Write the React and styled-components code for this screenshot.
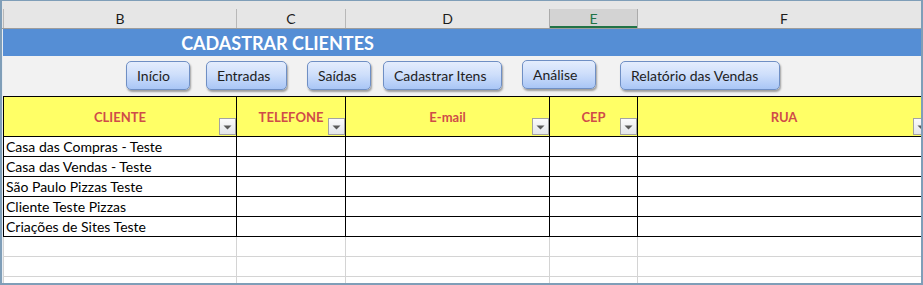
import React from "react";
import styled, { createGlobalStyle, css } from "styled-components";

const FONT = `Lato, "Liberation Sans", Arial, sans-serif`;

const Global = createGlobalStyle`
  html, body { margin: 0; padding: 0; background: #ffffff; }
  * { box-sizing: border-box; }
`;

const COLS = [
  { key: "B", w: 233, label: "CLIENTE" },
  { key: "C", w: 109, label: "TELEFONE" },
  { key: "D", w: 204, label: "E-mail" },
  { key: "E", w: 88, label: "CEP", selected: true },
  { key: "F", w: 293, label: "RUA" },
];
const TEMPLATE = COLS.map((c) => `${c.w}px`).join(" ");

const CLIENTS = [
  "Casa das Compras - Teste",
  "Casa das Vendas - Teste",
  "São Paulo Pizzas Teste",
  "Cliente Teste Pizzas",
  "Criações de Sites Teste",
];

const BUTTONS = [
  { label: "Início", gap: 123, w: 64 },
  { label: "Entradas", gap: 16, w: 81 },
  { label: "Saídas", gap: 20, w: 64 },
  { label: "Cadastrar Itens", gap: 12, w: 119 },
  { label: "Análise", gap: 20, w: 74, dy: -1 },
  { label: "Relatório das Vendas", gap: 24, w: 160 },
];

const Frame = styled.div`
  width: 923px;
  height: 285px;
  border-style: solid;
  border-color: #7f9eb8;
  border-width: 1px 2px 2px 2px;
  background: #e9edf1;
  overflow: hidden;
  display: flex;
  flex-direction: column;
  font-family: ${FONT};
`;

const HeaderBand = styled.div`
  height: 28px;
  flex: none;
  padding-top: 8px;
  background: #e6e6e6;
  border-bottom: 1px solid #9d9d9d;
  padding-left: 1px;
`;

const GridRow = styled.div`
  display: grid;
  grid-template-columns: ${TEMPLATE};
  width: max-content;
  margin-left: ${(p) => (p.$flush ? 0 : 1)}px;
  border-left: 1px solid ${(p) => p.$line};
  flex: none;
`;

const ColHead = styled.div`
  height: 19px;
  border-right: 1px solid #b8b8b8;
  display: flex;
  align-items: center;
  justify-content: center;
  font-size: 14px;
  color: #1c1c1c;
  ${(p) =>
    p.$selected &&
    css`
      background: #d3d3d3;
      color: #217346;
      box-shadow: inset 0 -2px 0 #217346;
      border-right-color: #ababab;
      margin-left: -1px;
      border-left: 1px solid #ababab;
    `}
`;

const TitleBand = styled.div`
  height: 27px;
  flex: none;
  margin-left: 1px;
  background: #558ed5;
  display: grid;
  grid-template-columns: 547px 1fr;
  align-items: center;
`;

const Title = styled.div`
  text-align: center;
  color: #ffffff;
  font-weight: 700;
  font-size: 18px;
  line-height: 1;
  padding-top: 1px;
  padding-left: 2px;
`;

const ButtonBand = styled.div`
  height: 40px;
  flex: none;
  margin-left: 1px;
  background: #f2f2f2;
  display: flex;
  align-items: flex-start;
  padding-top: 5px;
`;

const MacroButton = styled.div`
  flex: none;
  width: ${(p) => p.$w}px;
  height: 29px;
  margin-left: ${(p) => p.$gap}px;
  margin-top: ${(p) => p.$dy || 0}px;
  border: 1px solid #6f8fc4;
  border-radius: 5px;
  background: linear-gradient(180deg, #e4edfd 0%, #cfdffb 45%, #a9c6f6 100%);
  box-shadow: 1px 2px 2px rgba(0, 0, 0, 0.35);
  display: flex;
  align-items: center;
  padding-left: 10px;
  font-size: 14px;
  color: #1e1e1e;
  white-space: nowrap;
`;

const TableHead = styled(GridRow)`
  border-top: 1px solid #000;
`;

const HeadCell = styled.div`
  position: relative;
  height: 40px;
  background: #ffff66;
  border-right: 1px solid #000;
  border-bottom: 1px solid #000;
  display: flex;
  align-items: center;
  justify-content: center;
  font-weight: 700;
  font-size: 13px;
  color: #cf4c49;
  padding-top: 1px;
`;

const FilterButton = styled.div`
  position: absolute;
  right: 0;
  bottom: 1px;
  width: 17px;
  height: 17px;
  border: 1px solid #a3a3a3;
  background: linear-gradient(180deg, #fbfbfc 0%, #e3e5ea 100%);
  display: flex;
  align-items: center;
  justify-content: center;
  padding-top: 2px;
`;

const Cell = styled.div`
  height: 20px;
  border-right: 1px solid ${(p) => p.$line};
  border-bottom: 1px solid ${(p) => p.$line};
  background: #ffffff;
  font-size: 14px;
  color: #000;
  padding-left: 2px;
  display: flex;
  align-items: center;
  white-space: nowrap;
  overflow: hidden;
`;

function Triangle() {
  return (
    <svg width="9" height="5" viewBox="0 0 9 5">
      <path d="M0.5 0.5 L8.5 0.5 L4.5 4.5 Z" fill="#5a5a5a" />
    </svg>
  );
}

export default function App() {
  const emptyRows = 3;
  return (
    <>
      <Global />
      <Frame>
        <HeaderBand>
          <GridRow $line="#b8b8b8" $flush>
            {COLS.map((c) => (
              <ColHead key={c.key} $selected={c.selected}>
                {c.key}
              </ColHead>
            ))}
          </GridRow>
        </HeaderBand>

        <TitleBand>
          <Title>CADASTRAR CLIENTES</Title>
          <span />
        </TitleBand>

        <ButtonBand>
          {BUTTONS.map((b) => (
            <MacroButton key={b.label} $w={b.w} $gap={b.gap} $dy={b.dy}>
              {b.label}
            </MacroButton>
          ))}
        </ButtonBand>

        <TableHead $line="#000">
          {COLS.map((c) => (
            <HeadCell key={c.key}>
              {c.label}
              <FilterButton>
                <Triangle />
              </FilterButton>
            </HeadCell>
          ))}
        </TableHead>

        {CLIENTS.map((name) => (
          <GridRow key={name} $line="#000">
            {COLS.map((c, i) => (
              <Cell key={c.key} $line="#000">
                {i === 0 ? name : ""}
              </Cell>
            ))}
          </GridRow>
        ))}

        {Array.from({ length: emptyRows }).map((_, r) => (
          <GridRow key={r} $line="#d4d4d4">
            {COLS.map((c) => (
              <Cell key={c.key} $line="#d4d4d4" />
            ))}
          </GridRow>
        ))}
      </Frame>
    </>
  );
}
